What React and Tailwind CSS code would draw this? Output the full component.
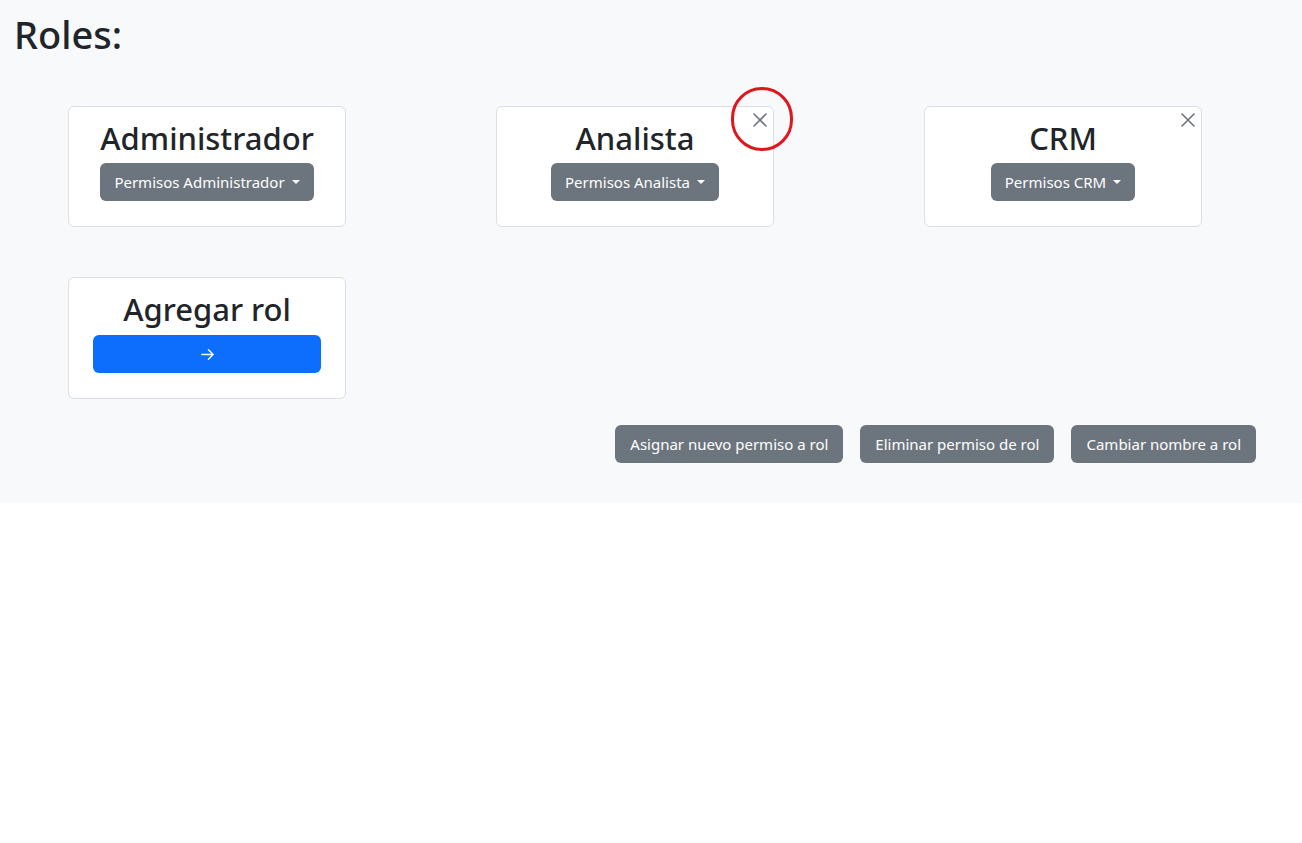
import React from "react";

const font = { fontFamily: '"Noto Sans", "Open Sans", sans-serif' };

function Caret() {
  return (
    <span className="inline-block ml-[7px] align-middle w-0 h-0 border-l-[4px] border-r-[4px] border-t-[4px] border-l-transparent border-r-transparent border-t-white" />
  );
}

function CloseX() {
  return (
    <svg width="16" height="16" viewBox="0 0 16 16" className="absolute top-[5px] right-[5px]">
      <path d="M2 2 L14 14 M14 2 L2 14" stroke="#6c757d" strokeWidth="1.6" strokeLinecap="round" />
    </svg>
  );
}

function RoleCard({ title, btn, close }) {
  return (
    <div className="relative w-[278px] h-[121px] bg-white border border-[#dcdfe3] rounded-[6px] flex flex-col items-center pt-[11px]">
      {close && <CloseX />}
      <div className="text-[31px] leading-[40px] font-medium text-[#212529]">{title}</div>
      <button className="mt-[5px] h-[38px] px-[14px] rounded-[6px] bg-[#6c757d] text-white text-[15px] flex items-center">
        {btn}
        <Caret />
      </button>
    </div>
  );
}

export default function App() {
  return (
    <div className="min-h-screen bg-white" style={font}>
      <div className="bg-[#f8f9fa] pb-[40px]">
        <h1 className="pl-[14px] pt-[11px] text-[38px] leading-[47px] font-medium text-[#212529]">Roles:</h1>
        <div className="pl-[68px] mt-[48px] flex flex-col gap-[50px]">
          <div className="flex gap-[150px]">
            <RoleCard title="Administrador" btn="Permisos Administrador" />
            <div className="relative">
              <RoleCard title="Analista" btn="Permisos Analista" close />
              <div className="absolute left-[235px] top-[-19px] w-[62px] h-[64px] rounded-full border-[3px] border-[#e0161e]" />
            </div>
            <RoleCard title="CRM" btn="Permisos CRM" close />
          </div>
          <div className="w-[278px] h-[122px] bg-white border border-[#dcdfe3] rounded-[6px] flex flex-col items-center pt-[11px] px-[24px]">
            <div className="text-[31px] leading-[40px] font-medium text-[#212529]">Agregar rol</div>
            <button className="mt-[6px] w-full h-[38px] rounded-[6px] bg-[#0d6efd] flex items-center justify-center">
              <svg width="15" height="15" viewBox="0 0 16 16" fill="none">
                <path d="M2 8 H14 M9 3 L14 8 L9 13" stroke="white" strokeWidth="1.5" strokeLinecap="round" strokeLinejoin="round" />
              </svg>
            </button>
          </div>
        </div>
        <div className="flex justify-end gap-[17px] pr-[46px] mt-[26px]">
          {["Asignar nuevo permiso a rol", "Eliminar permiso de rol", "Cambiar nombre a rol"].map((t) => (
            <button key={t} className="h-[38px] px-[15px] rounded-[6px] bg-[#6c757d] text-white text-[15px]">
              {t}
            </button>
          ))}
        </div>
      </div>
    </div>
  );
}
